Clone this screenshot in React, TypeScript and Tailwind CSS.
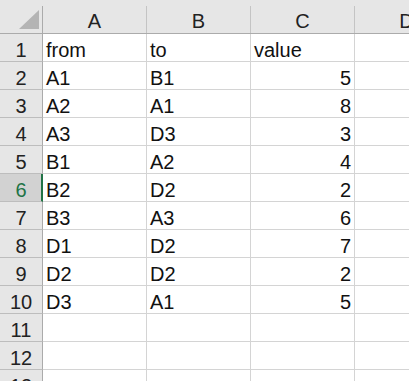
const rows: [string, string, string][] = [
  ["from", "to", "value"],
  ["A1", "B1", "5"],
  ["A2", "A1", "8"],
  ["A3", "D3", "3"],
  ["B1", "A2", "4"],
  ["B2", "D2", "2"],
  ["B3", "A3", "6"],
  ["D1", "D2", "7"],
  ["D2", "D2", "2"],
  ["D3", "A1", "5"],
  ["", "", ""],
  ["", "", ""],
  ["", "", ""],
]

function HeaderCell({ label }: { label: string }) {
  return (
    <div className="w-[104px] h-[27px] shrink-0 border-r border-[#c4c4c4] flex items-end justify-center leading-[20px] pb-[2px] text-[#222]">
      {label}
    </div>
  )
}

export default function App() {
  return (
    <div
      className="w-[409px] h-[381px] overflow-hidden bg-white text-[20px] text-[#111]"
      style={{ fontFamily: '"Liberation Sans", Arial, sans-serif' }}
    >
      {/* column headers */}
      <div className="h-[34px] bg-[#e6e6e6] border-b border-[#ababab] flex items-end">
        <div className="w-[43px] h-[27px] shrink-0 border-r border-[#ababab] flex items-start justify-end pr-[3px] pt-[4px]">
          <svg width="20" height="19" viewBox="0 0 20 19">
            <polygon points="20,0 20,19 0,19" fill="#b4b4b4" />
          </svg>
        </div>
        <HeaderCell label="A" />
        <HeaderCell label="B" />
        <HeaderCell label="C" />
        <HeaderCell label="D" />
      </div>

      {/* rows */}
      {rows.map((r, i) => {
        const n = i + 1
        const selected = n === 6
        return (
          <div key={n} className="h-[28px] flex">
            <div
              className={
                selected
                  ? "w-[43px] shrink-0 bg-[#d2d2d2] border-b border-[#bdbdbd] border-r-2 border-r-[#217346] flex items-end justify-center leading-[20px] pb-[1px] pl-[1px] text-[#217346]"
                  : "w-[43px] shrink-0 bg-[#e6e6e6] border-b border-[#bdbdbd] border-r border-r-[#ababab] flex items-end justify-center leading-[20px] pb-[1px] text-[#222]"
              }
            >
              {n}
            </div>
            <div className="w-[104px] shrink-0 border-b border-r border-[#d4d4d4] flex items-end leading-[20px] pb-[1px] pl-[3px]">
              {r[0]}
            </div>
            <div className="w-[104px] shrink-0 border-b border-r border-[#d4d4d4] flex items-end leading-[20px] pb-[1px] pl-[3px]">
              {r[1]}
            </div>
            <div
              className={
                n === 1
                  ? "w-[104px] shrink-0 border-b border-r border-[#d4d4d4] flex items-end leading-[20px] pb-[1px] pl-[3px]"
                  : "w-[104px] shrink-0 border-b border-r border-[#d4d4d4] flex items-end justify-end leading-[20px] pb-[1px] pr-[3px]"
              }
            >
              {r[2]}
            </div>
            <div className="w-[104px] shrink-0 border-b border-[#d4d4d4]" />
          </div>
        )
      })}
    </div>
  )
}
